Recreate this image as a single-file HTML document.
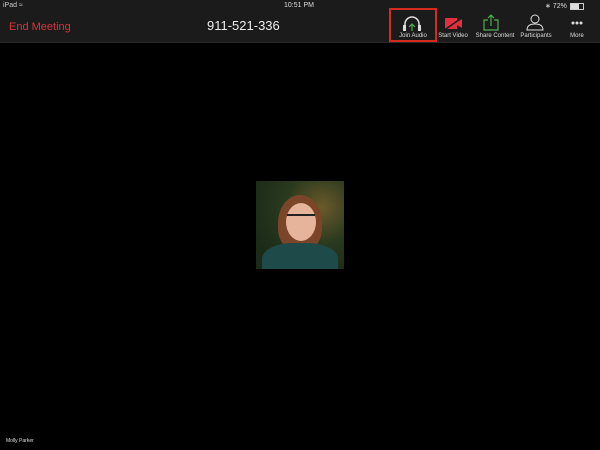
<!DOCTYPE html>
<html><head><style>
body{margin:0;width:600px;height:450px;background:#000;overflow:hidden;font-family:"Liberation Sans",sans-serif;position:relative}
.bar{position:absolute;left:0;top:0;width:600px;height:42px;background:#1b1b1b;border-bottom:1px solid #2a2a2a}
.t{position:absolute;white-space:nowrap}
.lab{position:absolute;top:33px;font-size:6px;color:#ddd;white-space:nowrap;transform:translateX(-50%)}
</style></head><body>
<div class="bar"></div>
<div class="t" style="left:3px;top:2px;font-size:7px;color:#ccc">iPad <span style="font-size:7px">&#8776;</span></div>
<div class="t" style="left:284px;top:2px;font-size:7px;color:#ddd">10:51 PM</div>
<div class="t" style="left:545px;top:2px;font-size:7px;color:#ddd">&#8727; 72%</div>
<div style="position:absolute;left:570px;top:3px;width:12px;height:5px;border:1px solid #ccc"><div style="width:8px;height:5px;background:#ddd"></div></div>
<div class="t" style="left:9px;top:21px;font-size:11px;color:#d8343a">End Meeting</div>
<div class="t" style="left:207px;top:18px;font-size:13px;color:#eee">911-521-336</div>
<div style="position:absolute;left:389px;top:8px;width:48px;height:34px;border:2px solid #d42b1e;box-sizing:border-box"></div>
<svg style="position:absolute;left:380px;top:10px" width="220" height="24">
<path d="M25 20 v-6 a7 7 0 0 1 14 0 v6" fill="none" stroke="#ddd" stroke-width="1.5"/>
<rect x="23" y="15" width="3" height="6" fill="#ddd"/><rect x="38" y="15" width="3" height="6" fill="#ddd"/>
<path d="M32 21 v-6 M29 17 l3-3 3 3" stroke="#4caf50" fill="none" stroke-width="1.2"/>
<rect x="65" y="8" width="12" height="11" fill="#e03040"/><path d="M77 12 l5-3 v9 l-5-3z" fill="#e03040"/><path d="M63 21 l20-14" stroke="#1b1b1b" stroke-width="1.5"/>
<path d="M108 10 h-4 v10 h14 v-10 h-4" stroke="#4caf50" fill="none" stroke-width="1.2"/><path d="M111 16 v-11 M108 8 l3-3 3 3" stroke="#4caf50" fill="none" stroke-width="1.2"/>
<circle cx="155" cy="9" r="4" stroke="#ddd" fill="none"/><path d="M147 20 q0-6 8-6 q8 0 8 6z" stroke="#ddd" fill="none"/>
<circle cx="193" cy="13" r="1.5" fill="#ddd"/><circle cx="197" cy="13" r="1.5" fill="#ddd"/><circle cx="201" cy="13" r="1.5" fill="#ddd"/>
</svg>
<div class="lab" style="left:413px">Join Audio</div>
<div class="lab" style="left:453px">Start Video</div>
<div class="lab" style="left:495px">Share Content</div>
<div class="lab" style="left:536px">Participants</div>
<div class="lab" style="left:577px">More</div>
<div style="position:absolute;left:256px;top:181px;width:88px;height:88px;overflow:hidden;background:radial-gradient(circle at 75% 30%,#6b5a2a,#2a3a1e 40%,#1c2a18 80%)">
<div style="position:absolute;left:22px;top:14px;width:44px;height:56px;border-radius:50% 50% 40% 40%;background:#7a4528"></div>
<div style="position:absolute;left:30px;top:22px;width:30px;height:38px;border-radius:50%;background:#e6b49a"></div>
<div style="position:absolute;left:31px;top:33px;width:28px;height:7px;border-top:2px solid #222"></div>
<div style="position:absolute;left:6px;top:62px;width:76px;height:40px;border-radius:40% 40% 0 0;background:#1f4a4a"></div>
</div>
<div class="t" style="left:6px;top:438px;font-size:5px;color:#ddd">Molly Parker</div>
</body></html>
